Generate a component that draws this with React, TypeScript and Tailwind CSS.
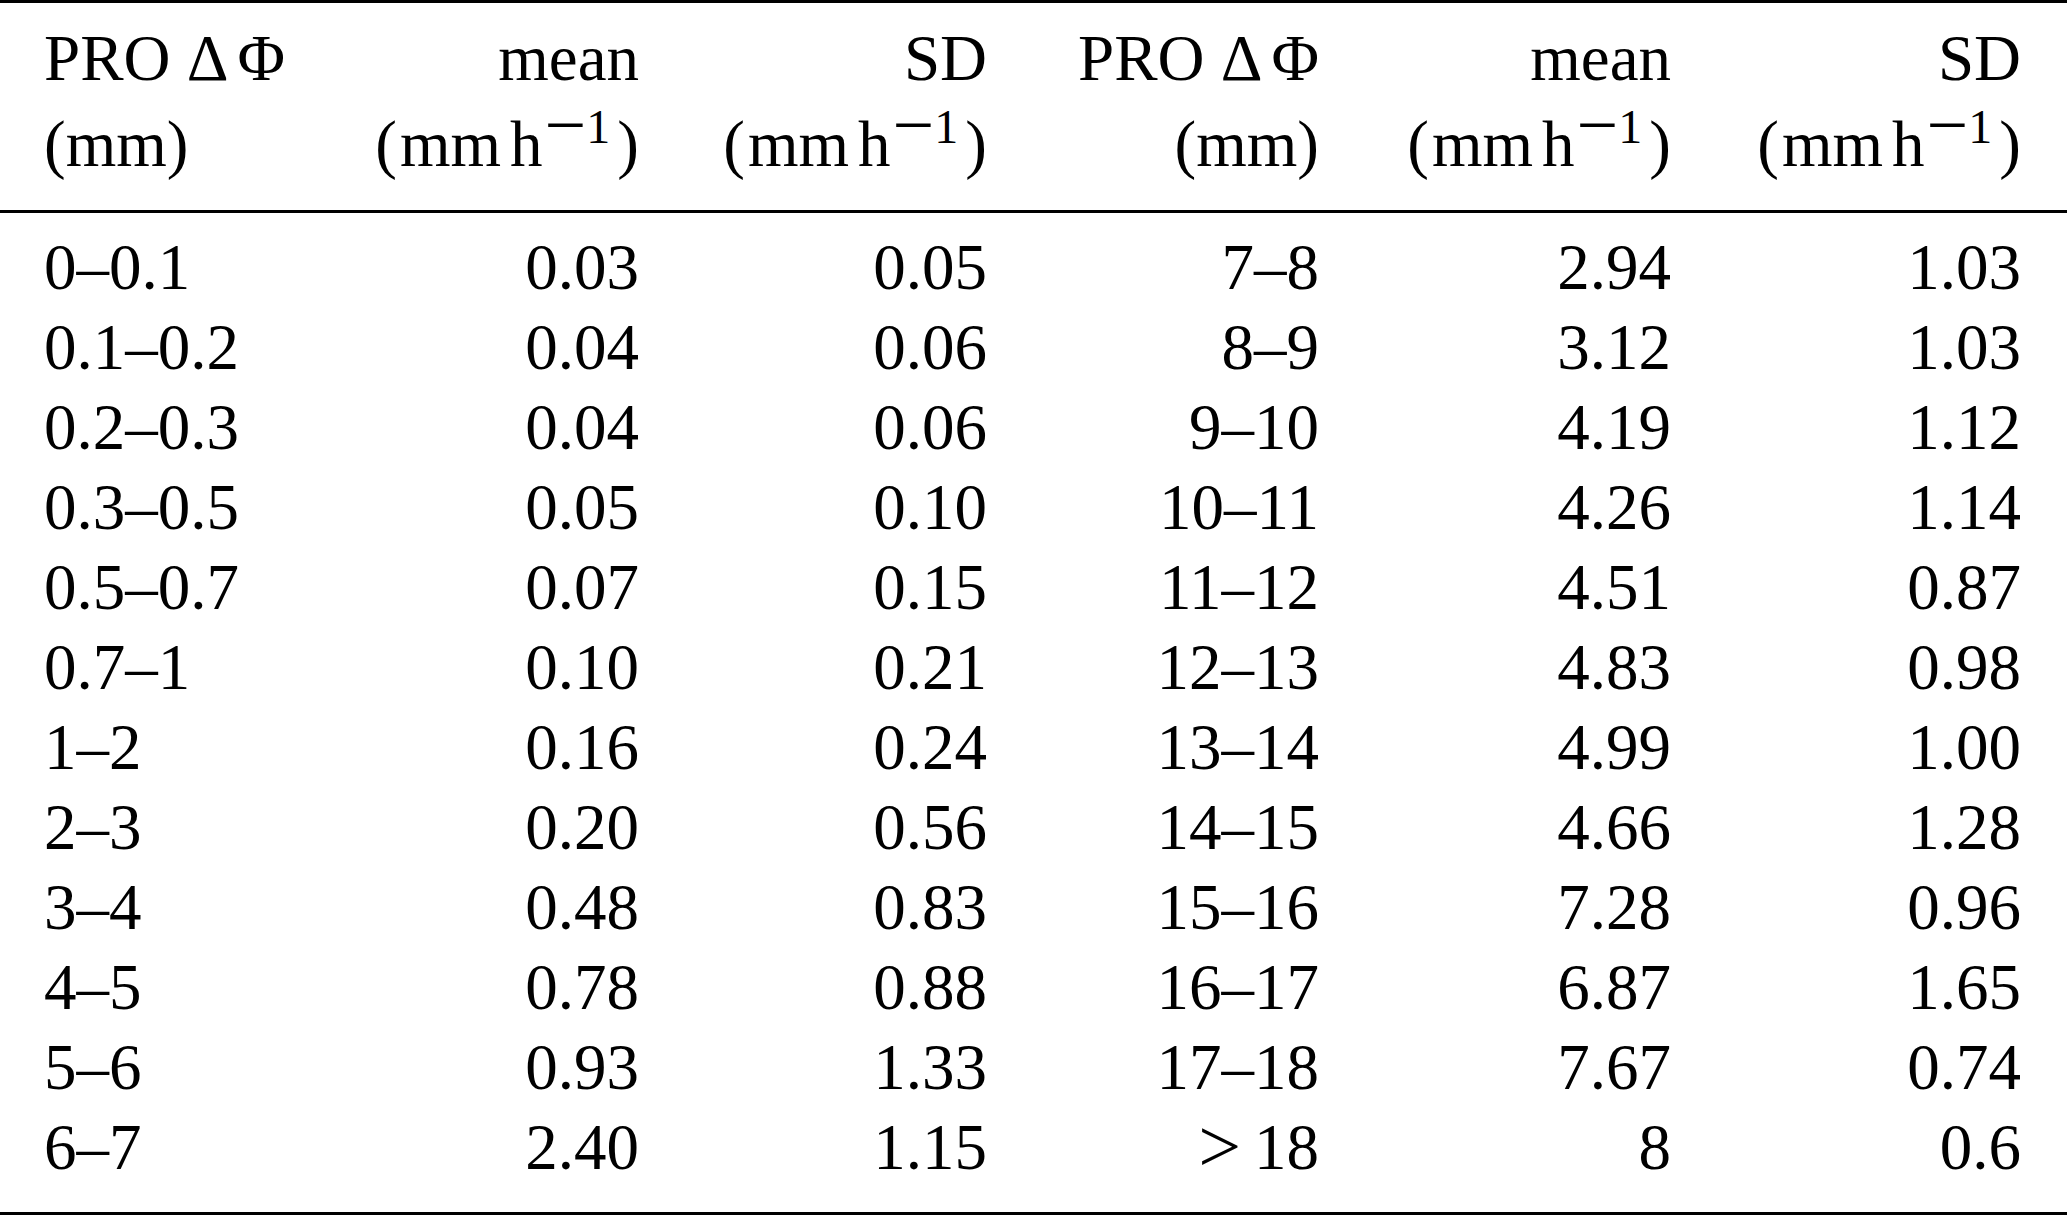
import React from "react";

const left: [string, string, string][] = [
  ["0–0.1", "0.03", "0.05"],
  ["0.1–0.2", "0.04", "0.06"],
  ["0.2–0.3", "0.04", "0.06"],
  ["0.3–0.5", "0.05", "0.10"],
  ["0.5–0.7", "0.07", "0.15"],
  ["0.7–1", "0.10", "0.21"],
  ["1–2", "0.16", "0.24"],
  ["2–3", "0.20", "0.56"],
  ["3–4", "0.48", "0.83"],
  ["4–5", "0.78", "0.88"],
  ["5–6", "0.93", "1.33"],
  ["6–7", "2.40", "1.15"],
];

const right: [React.ReactNode, string, string][] = [
  ["7–8", "2.94", "1.03"],
  ["8–9", "3.12", "1.03"],
  ["9–10", "4.19", "1.12"],
  ["10–11", "4.26", "1.14"],
  ["11–12", "4.51", "0.87"],
  ["12–13", "4.83", "0.98"],
  ["13–14", "4.99", "1.00"],
  ["14–15", "4.66", "1.28"],
  ["15–16", "7.28", "0.96"],
  ["16–17", "6.87", "1.65"],
  ["17–18", "7.67", "0.74"],
  [
    <span className="whitespace-nowrap">
      <span className="text-[76px] leading-[0px] [vertical-align:-3px]">&gt;</span>
      <span className="text-[52px] leading-[0px]"> </span>18
    </span>,
    "8",
    "0.6",
  ],
];

const GRID = "grid grid-cols-[246px_349px_348px_332px_352px_350px] pl-[44px] pr-[46px]";

function Unit() {
  return (
    <span className="whitespace-nowrap">
      (<span className="inline-block w-[3px]" />mm<span className="inline-block w-[9px]" />h
      <span className="inline-block w-[2px]" />
      <span className="text-[74px] leading-[0px] [vertical-align:16px]">−</span>
      <span className="text-[48px] leading-[0px] [vertical-align:23px]">1</span>
      <span className="inline-block w-[7px]" />)
    </span>
  );
}

function Phi() {
  return (
    <span className="whitespace-nowrap">
      PRO Δ<span className="inline-block w-[9px]" />Φ
    </span>
  );
}

export default function App() {
  return (
    <div className="w-[2067px] h-[1216px] bg-white text-black font-['Liberation_Serif',serif] text-[65px] leading-[80px]">
      <div className="h-[3px] bg-black" />
      <div className={`${GRID} pt-[15px] pb-[26px]`}>
        <div className="text-left">
          <div className="h-[80px]"><Phi /></div>
          <div className="mt-[6px] h-[80px]">(mm)</div>
        </div>
        <div className="text-right">
          <div className="h-[80px]">mean</div>
          <div className="mt-[6px] h-[80px]"><Unit /></div>
        </div>
        <div className="text-right">
          <div className="h-[80px]">SD</div>
          <div className="mt-[6px] h-[80px]"><Unit /></div>
        </div>
        <div className="text-right">
          <div className="h-[80px]"><Phi /></div>
          <div className="mt-[6px] h-[80px]">(mm)</div>
        </div>
        <div className="text-right">
          <div className="h-[80px]">mean</div>
          <div className="mt-[6px] h-[80px]"><Unit /></div>
        </div>
        <div className="text-right">
          <div className="h-[80px]">SD</div>
          <div className="mt-[6px] h-[80px]"><Unit /></div>
        </div>
      </div>
      <div className="h-[3px] bg-black" />
      <div className={`${GRID} pt-[14px] pb-[25px]`}>
        {left.map((l, i) => {
          const r = right[i];
          return (
            <React.Fragment key={i}>
              <div className="text-left h-[80px]">{l[0]}</div>
              <div className="text-right h-[80px]">{l[1]}</div>
              <div className="text-right h-[80px]">{l[2]}</div>
              <div className="text-right h-[80px]">{r[0]}</div>
              <div className="text-right h-[80px]">{r[1]}</div>
              <div className="text-right h-[80px]">{r[2]}</div>
            </React.Fragment>
          );
        })}
      </div>
      <div className="h-[3px] bg-black" />
    </div>
  );
}
